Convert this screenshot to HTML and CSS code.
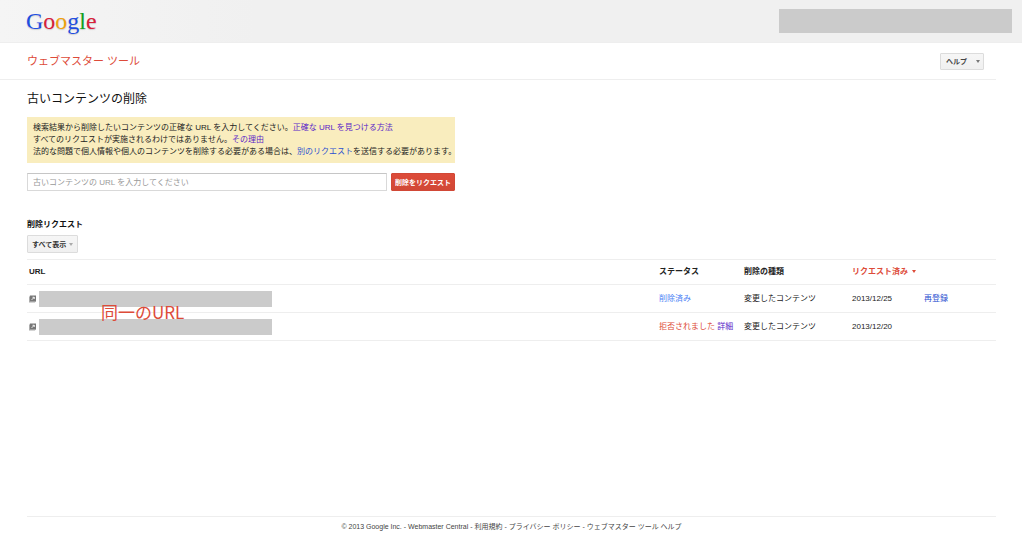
FILE: index.html
```html
<!DOCTYPE html>
<html lang="ja">
<head>
<meta charset="utf-8">
<title>ウェブマスター ツール</title>
<link rel="stylesheet" href="styles.css">
</head>
<body>
<header class="topbar">
  <a class="logo" href="#"><span class="blue">G</span><span class="red">o</span><span class="yellow">o</span><span class="blue">g</span><span class="green">l</span><span class="red">e</span></a>
  <div class="account"></div>
</header>
<div class="page">
  <div class="product">
    <a class="product-name" href="#">ウェブマスター ツール</a>
    <button class="help" type="button">ヘルプ<span class="caret"></span></button>
  </div>
  <main class="content">
    <h1>古いコンテンツの削除</h1>
    <div class="notice">
      <p>検索結果から削除したいコンテンツの正確な URL を入力してください。<a class="visited" href="#">正確な URL を見つける方法</a></p>
      <p>すべてのリクエストが実施されるわけではありません。<a class="visited" href="#">その理由</a></p>
      <p>法的な問題で個人情報や個人のコンテンツを削除する必要がある場合は、<a href="#">別のリクエスト</a>を送信する必要があります。</p>
    </div>
    <form class="request">
      <input type="text" aria-label="URL" placeholder="古いコンテンツの URL を入力してください">
      <button type="button">削除をリクエスト</button>
    </form>
    <h2>削除リクエスト</h2>
    <div class="filter">
      <select aria-label="削除リクエスト"><option>すべて表示</option></select>
      <span class="caret"></span>
    </div>
    <div class="requests">
      <table>
        <thead>
          <tr><th class="col-url">URL</th><th class="col-status">ステータス</th><th class="col-type">削除の種類</th><th class="col-date">リクエスト済み<span class="caret"></span></th><th class="col-action"></th></tr>
        </thead>
        <tbody>
          <tr>
            <td><div class="url"><svg viewBox="0 0 8 8"><path class="back" d="M0 1h1v6h6v1H0z"/><path class="front" d="M1 0h7v7H1z"/><path class="arrow" d="M3 5l3-3M4 2h2v2"/></svg><span class="redacted"></span></div></td>
            <td><span class="done">削除済み</span></td><td>変更したコンテンツ</td><td>2013/12/25</td><td><a href="#">再登録</a></td>
          </tr>
          <tr>
            <td><div class="url"><svg viewBox="0 0 8 8"><path class="back" d="M0 1h1v6h6v1H0z"/><path class="front" d="M1 0h7v7H1z"/><path class="arrow" d="M3 5l3-3M4 2h2v2"/></svg><span class="redacted"></span></div></td>
            <td><span class="denied">拒否されました</span> <a class="visited" href="#">詳細</a></td><td>変更したコンテンツ</td><td>2013/12/20</td><td></td>
          </tr>
        </tbody>
      </table>
      <span class="annotation">同一のURL</span>
    </div>
  </main>
  <footer>© 2013 Google Inc. - <a href="#">Webmaster Central</a> - <a href="#">利用規約</a> - <a href="#">プライバシー ポリシー</a> - <a href="#">ウェブマスター ツール ヘルプ</a></footer>
</div>
</body>
</html>
```
FILE: styles.css
```css
* { box-sizing: border-box; }

body {
  margin: 0;
  min-height: 100vh;
  display: flex;
  flex-direction: column;
  background: #fff;
  color: #222;
  font: 8px/12px "Liberation Sans", "Noto Sans CJK JP", sans-serif;
}

a { color: #2a4fd0; text-decoration: none; }
a.visited { color: #5a1fc8; }
h1, h2, p { margin: 0; }
button, input, select { font-family: inherit; margin: 0; }

.topbar {
  display: flex;
  justify-content: space-between;
  align-items: center;
  height: 43px;
  margin-right: 2px;
  padding: 0 10px 0 26px;
  background: linear-gradient(90deg, #f5f5f5, #f0f0f0 25%);
  border-bottom: 1px solid #eee;
}

.logo {
  font: 24px/40px "Liberation Serif", serif;
  text-shadow: 0 1px 1px #ccc;
}
.blue { color: #1f4fe0; }
.red { color: #d8203a; }
.yellow { color: #f0a010; }
.green { color: #10a020; }

.account { width: 233px; height: 24px; background: #cbcbcb; }

.page {
  flex: 1;
  display: flex;
  flex-direction: column;
  margin-right: 28px;
}

.product {
  display: flex;
  justify-content: space-between;
  align-items: center;
  height: 37px;
  padding: 0 12px 0 27px;
  border-bottom: 1px solid #eee;
}
.product-name { color: #dd4b39; font-size: 11px; line-height: 16px; }

.caret {
  display: inline-block;
  border: 2px solid transparent;
  border-top: 3px solid #777;
  border-bottom: 0;
}

.help {
  display: flex;
  align-items: center;
  justify-content: space-between;
  width: 44px;
  height: 17px;
  padding: 0 3px 0 5px;
  border: 1px solid #dcdcdc;
  border-radius: 1px;
  background: linear-gradient(#f6f6f6, #f0f0f0);
  color: #444;
  font-size: 7px;
  font-weight: bold;
}

.content { padding: 11px 0 0 27px; }

h1 { font-size: 12px; line-height: 17px; font-weight: normal; color: #111; }

.notice {
  width: 428px;
  margin-top: 9px;
  padding: 5px 0 5px 6px;
  background: #f9edbe;
  white-space: nowrap;
}

.request { display: flex; gap: 4px; margin-top: 10px; }
.request input {
  width: 360px;
  height: 18px;
  padding: 0 5px;
  border: 1px solid #d9d9d9;
  border-top-color: #c6c6c6;
  font-size: 8px;
}
.request input::placeholder { color: #999; }
.request button {
  width: 64px;
  height: 18px;
  padding: 0;
  border: 1px solid #d14836;
  border-radius: 1px;
  background: linear-gradient(#dd4b39, #d14836);
  color: #fff;
  font-size: 7px;
  font-weight: bold;
}

h2 { margin-top: 28px; font-size: 8px; line-height: 12px; color: #111; }

.filter { position: relative; width: 51px; margin-top: 4px; }
.filter select {
  display: block;
  width: 100%;
  height: 18px;
  padding: 0 4px;
  appearance: none;
  border: 1px solid #dcdcdc;
  border-radius: 1px;
  background: linear-gradient(#f6f6f6, #f0f0f0);
  color: #333;
  font-size: 7px;
  font-weight: bold;
}
.filter .caret { position: absolute; right: 5px; top: 8px; border-top-color: #aaa; pointer-events: none; }

.requests { position: relative; margin-top: 6px; }
table {
  width: 100%;
  table-layout: fixed;
  border-collapse: collapse;
  border-top: 1px solid #eee;
}
th, td { padding: 0; text-align: left; border-bottom: 1px solid #eee; white-space: nowrap; }
th { height: 25px; }
td { height: 28px; }
.col-url { padding-left: 2px; }
.col-status { width: 85px; }
.col-type { width: 108px; }
.col-date { width: 72px; color: #dd4b39; }
.col-action { width: 72px; }
.col-date .caret { margin-left: 4px; border-top-color: #dd4b39; vertical-align: 1px; }
.done { color: #4d82f5; }
.denied { color: #dd4b39; }

.url { display: flex; align-items: center; gap: 3px; padding-left: 2px; }
.url svg { width: 7px; height: 8px; }
.back { fill: #aaa; }
.front { fill: #777; }
.arrow { fill: none; stroke: #fff; }
.redacted { width: 233px; height: 16px; background: #cbcbcb; }

.annotation {
  position: absolute;
  left: 74px;
  top: 41px;
  color: #dd4b39;
  font: 17px/24px "Noto Sans CJK JP", sans-serif;
}

footer {
  margin: auto 0 0 27px;
  height: 17px;
  padding-top: 4px;
  border-top: 1px solid #eee;
  color: #444;
  font-size: 7px;
  line-height: 12px;
  text-align: center;
}
footer a { color: #444; }
```
